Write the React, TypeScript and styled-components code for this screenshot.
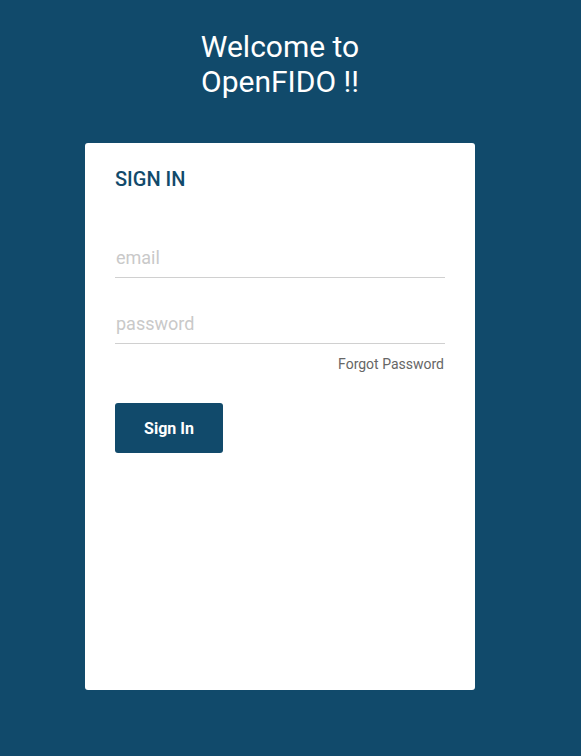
import React from "react";
import styled, { createGlobalStyle } from "styled-components";

const Global = createGlobalStyle`
  html, body { margin: 0; padding: 0; }
  body {
    background: #114a6b;
    font-family: Roboto, "Liberation Sans", Arial, sans-serif;
    min-height: 756px;
  }
`;

const Page = styled.div`
  display: flex;
  flex-direction: column;
  padding: 29px 0 0 85px;
  min-height: 756px;
  box-sizing: border-box;
`;

const Column = styled.div`
  width: 390px;
  display: flex;
  flex-direction: column;
  align-items: center;
`;

const Title = styled.h1`
  margin: 0;
  color: #ffffff;
  font-size: 30px;
  line-height: 35px;
  font-weight: 400;
  text-align: center;
  width: 220px;
`;

const Card = styled.div`
  margin-top: 44px;
  width: 390px;
  height: 547px;
  box-sizing: border-box;
  background: #ffffff;
  border-radius: 3px;
  padding: 24px 30px;
  display: flex;
  flex-direction: column;
`;

const Heading = styled.h2`
  margin: 0;
  color: #114a6b;
  font-size: 20px;
  line-height: 24px;
  font-weight: 500;
`;

const Form = styled.form`
  display: flex;
  flex-direction: column;
  margin-top: 51px;
`;

const Field = styled.input<{ $gap?: number }>`
  border: none;
  border-bottom: 1px solid #d0d0d0;
  outline: none;
  padding: 6px 1px 9px;
  margin: ${(p) => p.$gap ?? 0}px 0 0;
  font-family: Roboto, "Liberation Sans", Arial, sans-serif;
  font-size: 18px;
  line-height: 20px;
  color: #333;
  background: transparent;
  &::placeholder { color: #c9c9c9; }
`;

const Forgot = styled.a`
  align-self: flex-end;
  margin-top: 11px;
  margin-right: 1px;
  font-size: 14px;
  line-height: 18px;
  color: #666666;
  text-decoration: none;
  cursor: pointer;
`;

const Button = styled.button`
  align-self: flex-start;
  margin-top: 30px;
  width: 108px;
  height: 50px;
  border: none;
  border-radius: 3px;
  background: #114a6b;
  color: #ffffff;
  font-family: Roboto, "Liberation Sans", Arial, sans-serif;
  font-size: 16px;
  font-weight: 700;
  cursor: pointer;
`;

export default function App() {
  return (
    <>
      <Global />
      <Page>
        <Column>
          <Title>Welcome to OpenFIDO !!</Title>
          <Card>
            <Heading>SIGN IN</Heading>
            <Form onSubmit={(e) => e.preventDefault()}>
              <Field type="email" placeholder="email" />
              <Field type="password" placeholder="password" $gap={30} />
              <Forgot>Forgot Password</Forgot>
              <Button type="submit">Sign In</Button>
            </Form>
          </Card>
        </Column>
      </Page>
    </>
  );
}
